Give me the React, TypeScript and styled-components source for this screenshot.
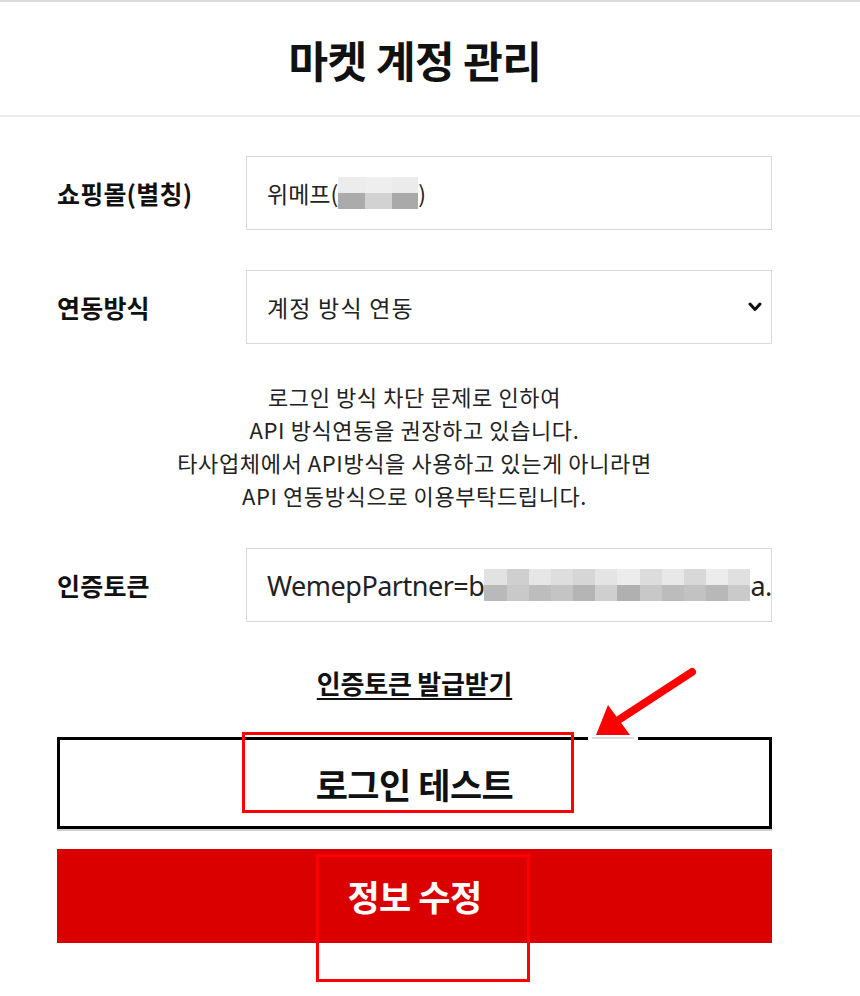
import styled, { createGlobalStyle } from 'styled-components';

const GlobalStyle = createGlobalStyle`
  html, body {
    margin: 0;
    padding: 0;
    background: #fff;
  }
  body {
    font-family: 'Noto Sans CJK KR', 'Noto Sans', sans-serif;
    color: #111;
  }
`;

const Page = styled.div`
  position: relative;
  width: 860px;
  height: 996px;
  overflow: hidden;
  border-top: 2px solid #dcdcdc;
  box-sizing: border-box;
`;

const Header = styled.header`
  height: 113px;
  display: flex;
  align-items: center;
  justify-content: center;
  border-bottom: 2px solid #ececec;
`;

const Title = styled.h1`
  margin: 0;
  font-size: 43px;
  font-weight: 700;
  letter-spacing: -0.5px;
  color: #111;
  transform: translateX(-15px);
`;

const Form = styled.div`
  width: 715px;
  margin-left: 57px;
  display: flex;
  flex-direction: column;
`;

const Row = styled.div<{ $top: number }>`
  display: flex;
  align-items: center;
  margin-top: ${(p) => p.$top}px;
`;

const Label = styled.div`
  width: 189px;
  font-size: 25px;
  font-weight: 700;
  letter-spacing: 0.2px;
`;

const Field = styled.div`
  flex: 1;
  height: 74px;
  box-sizing: border-box;
  border: 1px solid #d9d9d9;
  display: flex;
  align-items: center;
  padding: 0 9px 0 20px;
  font-size: 23px;
  color: #222;
  overflow: hidden;
  white-space: nowrap;
`;

const SelectText = styled.span`
  flex: 1;
  letter-spacing: 1.2px;
`;

const Mosaic = styled.span<{ $w: number; $cols: number }>`
  display: inline-grid;
  grid-template-columns: repeat(${(p) => p.$cols}, 1fr);
  grid-template-rows: 16px 16px;
  width: ${(p) => p.$w}px;
  height: 32px;
  flex-shrink: 0;
`;

const Tile = styled.span<{ $c: string }>`
  background: ${(p) => p.$c};
`;

const TokenText = styled.span`
  font-family: 'Noto Sans', sans-serif;
  font-size: 27px;
  letter-spacing: -0.5px;
`;

const Notice = styled.p`
  margin: 36px 0 0;
  text-align: center;
  font-size: 22px;
  line-height: 33px;
  letter-spacing: 0.6px;
  color: #222;
`;

const IssueLink = styled.a`
  align-self: center;
  margin-top: 42px;
  font-size: 26px;
  font-weight: 700;
  letter-spacing: -0.2px;
  color: #111;
  text-decoration: underline;
  text-underline-offset: 4px;
`;

const OutlineButton = styled.button`
  margin-top: 36px;
  height: 92px;
  border: 3px solid #000;
  background: #fff;
  font-family: inherit;
  font-size: 35px;
  font-weight: 700;
  letter-spacing: -0.5px;
  color: #111;
  box-shadow: 0 2px 0 #d0d0d0;
`;

const SubmitButton = styled.button`
  margin-top: 20px;
  height: 94px;
  border: none;
  background: #db0000;
  color: #fff;
  font-family: inherit;
  font-size: 35px;
  font-weight: 700;
  letter-spacing: -0.5px;
  padding-bottom: 2px;
`;

const Highlight = styled.div<{ $x: number; $y: number; $w: number; $h: number }>`
  position: absolute;
  left: ${(p) => p.$x}px;
  top: ${(p) => p.$y}px;
  width: ${(p) => p.$w}px;
  height: ${(p) => p.$h}px;
  box-sizing: border-box;
  border: 3px solid #f00;
  pointer-events: none;
`;

const Overlay = styled.svg`
  position: absolute;
  left: 0;
  top: 0;
  pointer-events: none;
`;

const tokenTiles = [
  '#e2e2e2', '#cfcfcf', '#e6e6e6', '#dedede', '#d6d6d6', '#e4e4e4', '#ececec', '#dcdcdc', '#e8e8e8', '#d8d8d8', '#ececec', '#e0e0e0',
  '#b9b9b9', '#c9c9c9', '#bdbdbd', '#c4c4c4', '#b5b5b5', '#cfcfcf', '#b0b0b0', '#c8c8c8', '#bcbcbc', '#c2c2c2', '#b8b8b8', '#cacaca',
];
const nameTiles = ['#ececec', '#eeeeee', '#ebebeb', '#ababab', '#d2d2d2', '#a9a9a9'];

const Chevron = () => (
  <svg width="14" height="10" viewBox="0 0 14 10">
    <polyline points="2,2 7,7.5 12,2" fill="none" stroke="#111" strokeWidth="3" strokeLinecap="round" strokeLinejoin="round" />
  </svg>
);

export default function App() {
  return (
    <>
      <GlobalStyle />
      <Page>
        <Header>
          <Title>마켓 계정 관리</Title>
        </Header>
        <Form>
          <Row $top={39}>
            <Label>쇼핑몰(별칭)</Label>
            <Field>
              위메프(
              <Mosaic $w={80} $cols={3}>
                {nameTiles.map((c, i) => (
                  <Tile key={i} $c={c} />
                ))}
              </Mosaic>
              )
            </Field>
          </Row>
          <Row $top={40}>
            <Label>연동방식</Label>
            <Field>
              <SelectText>계정 방식 연동</SelectText>
              <Chevron />
            </Field>
          </Row>
          <Notice>
            로그인 방식 차단 문제로 인하여
            <br />
            API 방식연동을 권장하고 있습니다.
            <br />
            타사업체에서 API방식을 사용하고 있는게 아니라면
            <br />
            API 연동방식으로 이용부탁드립니다.
          </Notice>
          <Row $top={36}>
            <Label>인증토큰</Label>
            <Field>
              <TokenText>WemepPartner=b</TokenText>
              <Mosaic $w={266} $cols={12}>
                {tokenTiles.map((c, i) => (
                  <Tile key={i} $c={c} />
                ))}
              </Mosaic>
              <TokenText>a.</TokenText>
            </Field>
          </Row>
          <IssueLink>인증토큰 발급받기</IssueLink>
          <OutlineButton>로그인 테스트</OutlineButton>
          <SubmitButton>정보 수정</SubmitButton>
        </Form>

        <Highlight $x={242} $y={730} $w={332} $h={81} />
        <Highlight $x={316} $y={852} $w={214} $h={128} />
        <Overlay width="860" height="996" viewBox="0 0 860 996">
          <rect x="588" y="733" width="50" height="6" fill="#fff" />
          <line x1="592" y1="736" x2="634" y2="736" stroke="#bbb" strokeWidth="1" />
          <line x1="692" y1="670" x2="620" y2="717" stroke="#f00" strokeWidth="8" strokeLinecap="round" />
          <polygon points="596,733 608,703 630,733" fill="#f00" />
        </Overlay>
      </Page>
    </>
  );
}
